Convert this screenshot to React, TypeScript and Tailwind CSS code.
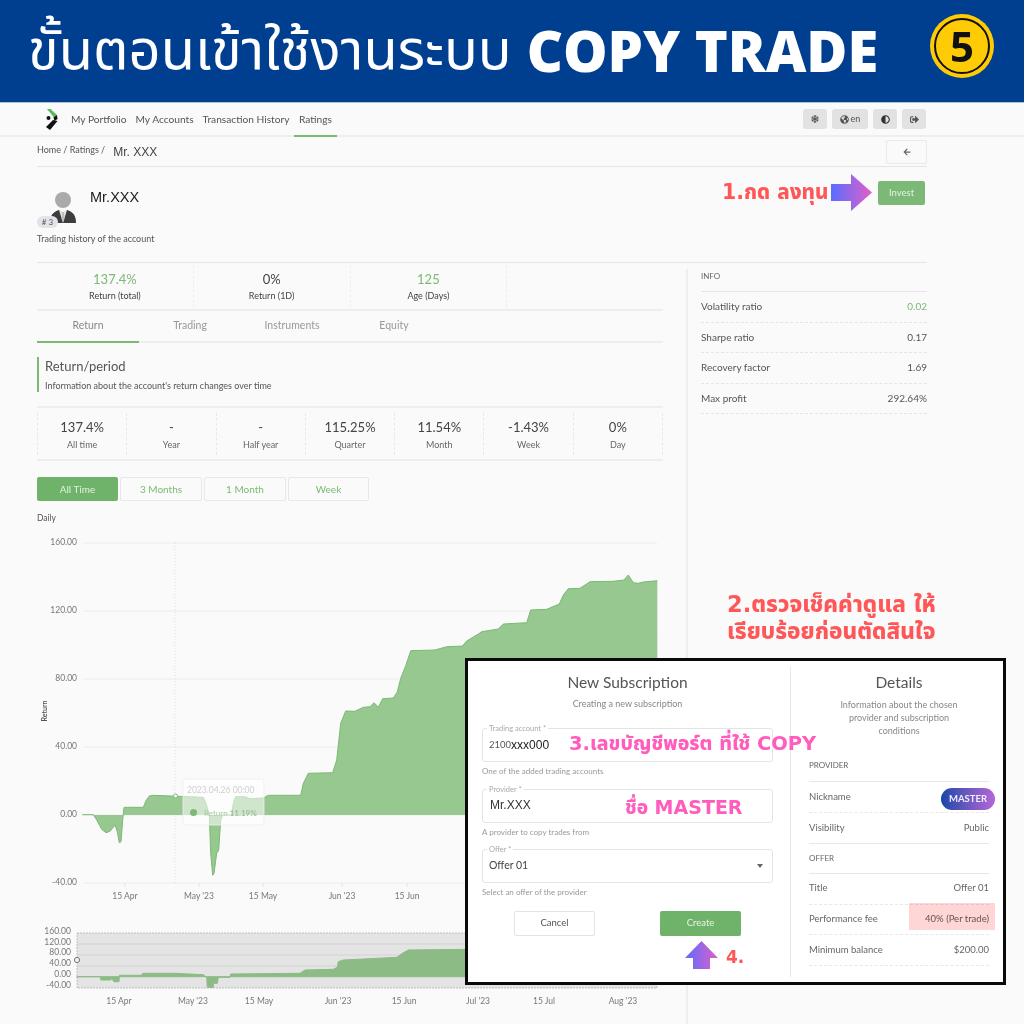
import React from "react";
import { FaSnowflake, FaGlobeAmericas, FaAdjust, FaSignOutAlt, FaArrowLeft } from "react-icons/fa";

const main: number[][] = [[247,884],[280,884],[290,900],[305,928],[318,938],[330,934],[345,915],[352,935],[358,968],[363,965],[368,900],[372,862],[430,862],[438,842],[448,828],[460,826],[610,832],[618,850],[628,885],[632,1000],[638,1066],[642,1060],[650,1000],[656,990],[662,900],[668,885],[695,885],[700,850],[707,830],[735,830],[750,836],[790,834],[805,826],[902,826],[910,790],[925,760],[998,758],[1010,720],[1022,610],[1037,573],[1065,574],[1090,562],[1110,560],[1122,548],[1135,562],[1148,536],[1180,534],[1192,516],[1202,475],[1218,435],[1232,392],[1305,390],[1340,380],[1390,378]];
const mainRight: number[][] = [[190,345],[200,333],[235,312],[245,305],[295,297],[310,282],[380,278],[392,240],[440,238],[478,222],[490,195],[505,176],[540,175],[570,155],[640,154],[672,150],[685,135],[700,158],[715,160],[730,156],[772,152]];
const over: number[][] = [[230,1370],[300,1370],[303,1380],[332,1380],[335,1376],[342,1385],[357,1385],[358,1366],[425,1366],[428,1360],[525,1360],[610,1364],[620,1372],[622,1402],[640,1402],[640,1390],[652,1390],[655,1372],[690,1372],[692,1362],[900,1360],[915,1350],[1000,1348],[1012,1342],[1015,1325],[1030,1320],[1190,1312],[1210,1298],[1225,1290],[1400,1288],[1971,1272]];

const mainPts = [
  ...main.map(([x, y]) => [x / 3, 520 + y / 3]),
  ...mainRight.map(([x, y]) => [400 + x / 3, 530 + y / 3]),
];
const overPts = over.map(([x, y]) => [x / 3, 520 + y / 3]);
const toD = (p: number[][]) => p.map(([x, y], i) => `${i ? "L" : "M"}${x.toFixed(1)} ${y.toFixed(1)}`).join(" ");

function Chart() {
  const first = mainPts[0][0];
  const last = mainPts[mainPts.length - 1][0];
  const oFirst = overPts[0][0];
  const oLast = overPts[overPts.length - 1][0];
  const ticks = [["160.00", 543], ["120.00", 611], ["80.00", 679], ["40.00", 747], ["0.00", 815], ["-40.00", 883]] as const;
  const oTicks = [["160.00", 932], ["120.00", 943], ["80.00", 953], ["40.00", 964], ["0.00", 975], ["-40.00", 986]] as const;
  return (
    <svg width="626" height="494" viewBox="37 530 626 494" className="block font-['Lato',sans-serif]">
      {ticks.map(([t, y]) => (
        <g key={t}>
          <line x1="83" x2="657" y1={y} y2={y} stroke="#ececec" strokeWidth="1" />
          <text x="77" y={y + 2} textAnchor="end" fontSize="8.5" fill="#777">{t}</text>
        </g>
      ))}
      <text transform="translate(47 711) rotate(-90)" textAnchor="middle" fontSize="7" fontWeight="700" fill="#555">Return</text>
      <line x1="175" x2="175" y1="543" y2="883" stroke="#ddd" strokeDasharray="1 2" />
      <path d={`${toD(mainPts)} L${last} 815 L${first} 815 Z`} fill="#96c88f" stroke="none" />
      <path d={toD(mainPts)} fill="none" stroke="#7cb976" strokeWidth="1" />
      <circle cx="175.5" cy="796" r="2" fill="#fff" stroke="#7cb976" />
      <rect x="183" y="779" width="81" height="46" rx="3" fill="#ffffff" fillOpacity="0.55" stroke="#eeeeee" strokeOpacity="0.8" />
      <text x="187" y="793" fontSize="8.5" fill="#cfcfcf">2023.04.26 00:00</text>
      <circle cx="193.5" cy="812.5" r="3.5" fill="#7cb976" />
      <text x="204" y="816" fontSize="8" fill="#a9c9a6">Return <tspan fontWeight="700" fill="#9fbf9c">11.19%</tspan></text>
      {[["15 Apr", 125], ["May '23", 199], ["15 May", 263], ["Jun '23", 342], ["15 Jun", 407]].map(([t, x]) => (
        <g key={t as string}>
          <line x1={x} x2={x} y1="883" y2="887" stroke="#e5e5e5" />
          <text x={x} y="899" textAnchor="middle" fontSize="8.5" fill="#777">{t}</text>
        </g>
      ))}
      <rect x="77" y="933" width="580" height="55" fill="#e4e4e4" stroke="#aaa" strokeDasharray="2 1" strokeWidth="0.7" />
      {[944, 955, 966].map((y) => (
        <line key={y} x1="77" x2="657" y1={y} y2={y} stroke="#d2d2d2" />
      ))}
      {oTicks.map(([t, y]) => (
        <text key={t} x="71" y={y + 2} textAnchor="end" fontSize="8.5" fill="#777">{t}</text>
      ))}
      <path d={`${toD(overPts)} L${oLast} 976.7 L${oFirst} 976.7 Z`} fill="#8cbb86" stroke="#8cbb86" strokeWidth="1" />
      <circle cx="77" cy="960" r="2.6" fill="#f3f3f3" stroke="#777" />
      {[["15 Apr", 119], ["May '23", 193], ["15 May", 259], ["Jun '23", 338], ["15 Jun", 404], ["Jul '23", 478], ["15 Jul", 544], ["Aug '23", 623]].map(([t, x]) => (
        <text key={t as string} x={x} y="1004" textAnchor="middle" fontSize="8.5" fill="#777">{t}</text>
      ))}
    </svg>
  );
}

function Logo() {
  return (
    <svg width="13" height="21" viewBox="0 0 13 21">
      <path d="M2 0 L5.5 0 L12 6 L9 8.5 Z" fill="#5cb85c" />
      <path d="M8.5 8.5 L12 6 L12.5 10 L9.5 12 Z" fill="#111" />
      <circle cx="3.5" cy="9" r="2" fill="#111" />
      <path d="M8 11 L12.5 12 L5 21 L1 18 Z" fill="#111" />
    </svg>
  );
}

function Avatar() {
  return (
    <svg width="28" height="33" viewBox="0 0 28 33">
      <circle cx="14" cy="9" r="8" fill="#aaaaaa" />
      <path d="M1 32 C1 24 4 21 10 19 L14 22 L18 19 C24 21 27 24 27 32 Z" fill="#3d3d3d" />
      <path d="M10 19 L14 32 L18 19 L14 21 Z" fill="#e4e4e4" />
      <path d="M13 21 L15 21 L15.4 28 L14 31 L12.6 28 Z" fill="#bdbdbd" />
    </svg>
  );
}

function Stat({ value, label, green }: { value: string; label: string; green?: boolean }) {
  return (
    <div className="flex-1 h-[41px] pt-[2px] border-r border-dashed border-[#eeeeee] flex flex-col items-center justify-center">
      <div className={`text-[13px] leading-[17px] ${green ? "text-[#7cb976]" : "text-[#444]"}`}>{value}</div>
      <div className="mt-[1px] text-[9px] leading-[14px] text-[#444]">{label}</div>
    </div>
  );
}

function Period({ value, label }: { value: string; label: string }) {
  return (
    <div className="flex-1 h-[42px] pt-[3px] border-r border-dashed border-[#e8e8e8] flex flex-col items-center justify-center">
      <div className="text-[13px] leading-[17px] text-[#444]">{value}</div>
      <div className="mt-[2px] text-[9px] leading-[14px] text-[#666]">{label}</div>
    </div>
  );
}

function InfoRow({ label, value, green }: { label: string; value: string; green?: boolean }) {
  return (
    <div className="h-[30.5px] border-b border-dashed border-[#e5e5e5] flex items-center justify-between text-[10px] text-[#555]">
      <span>{label}</span>
      <span className={green ? "text-[#7cb976]" : ""}>{value}</span>
    </div>
  );
}

function DetailRow({ label, value, dashed = true, h31 }: { label: string; value?: string; dashed?: boolean; h31?: boolean }) {
  return (
    <div className={`${h31 ? "h-[31px]" : "h-[30.5px]"} flex items-center justify-between text-[9.5px] text-[#666] border-b border-[#e8e8e8] ${dashed ? "border-dashed" : ""}`}>
      <span>{label}</span>
      {value ? <span>{value}</span> : null}
    </div>
  );
}

function Field({ label, helper, children }: { label: string; helper: string; children: React.ReactNode }) {
  return (
    <div className="h-[60.5px]">
      <div className="relative h-[34px] border border-[#e4e4e4] rounded-[3px] flex items-center pl-[6px] pr-[9px]">
        <span className="absolute left-[4px] top-[-5px] bg-white px-[2px] text-[7.5px] leading-[9px] text-[#aaa]">{label}</span>
        {children}
      </div>
      <div className="mt-[4px] text-[8px] leading-[10px] text-[#999]">{helper}</div>
    </div>
  );
}

function Modal() {
  return (
    <div className="absolute left-[465px] top-[658px] w-[541px] h-[327px] bg-white border-[3px] border-[#0a0a0a] flex font-['Lato',sans-serif]">
      <div className="w-[322px] pl-[14px] pr-[17px] flex flex-col">
        <div className="mt-[11px] text-center text-[15.5px] leading-[20px] text-[#555]">New Subscription</div>
        <div className="mt-[6px] text-center text-[9px] leading-[12px] text-[#888]">Creating a new subscription</div>
        <div className="mt-[18px]">
          <Field label="Trading account *" helper="One of the added trading accounts">
            <span className="text-[9.5px] text-[#555]">2100</span>
            <span className="text-[12px] text-[#222] font-['Liberation_Sans',sans-serif]">xxx000</span>
          </Field>
          <Field label="Provider *" helper="A provider to copy trades from">
            <span className="ml-[1px] mb-[2px] text-[12px] text-[#333] font-['Liberation_Sans',sans-serif]">Mr.XXX</span>
          </Field>
          <Field label="Offer *" helper="Select an offer of the provider">
            <span className="text-[10.5px] text-[#444]">Offer 01</span>
            <span className="ml-auto w-0 h-0 border-x-[3.5px] border-x-transparent border-t-[4px] border-t-[#666]" />
          </Field>
        </div>
        <div className="mt-[1.5px] flex">
          <button className="ml-[32px] w-[81px] h-[25px] rounded-[2px] border border-[#e4e4e4] bg-white text-[9.5px] text-[#555]">Cancel</button>
          <button className="ml-[65px] w-[81px] h-[25px] rounded-[2px] bg-[#6fb36a] text-[9.5px] text-[#e8f4e6]">Create</button>
        </div>
      </div>
      <div className="my-[5px] flex-1 border-l border-[#e8e8e8] pl-[18px] pr-[14px] flex flex-col">
        <div className="mt-[6px] text-center text-[15.5px] leading-[20px] text-[#555]">Details</div>
        <div className="mx-auto mt-[6px] w-[130px] text-center text-[9px] leading-[13px] text-[#888]">Information about the chosen provider and subscription conditions</div>
        <div className="mt-[22px] h-[23px] border-b border-[#e8e8e8] text-[8px] leading-[10px] text-[#666] pt-[1px]">PROVIDER</div>
        <DetailRow label="Nickname" h31 />
        <DetailRow label="Visibility" value="Public" dashed={false} />
        <div className="h-[30px] border-b border-[#e8e8e8] text-[8px] flex items-center text-[#666]">OFFER</div>
        <DetailRow label="Title" value="Offer 01" h31 />
        <DetailRow label="Performance fee" value="40% (Per trade)" />
        <DetailRow label="Minimum balance" value="$200.00" />
      </div>
    </div>
  );
}

function Annotations() {
  return (
    <>
      <div className="absolute left-[722px] top-[178px] text-[20.5px] leading-[28px] font-extrabold text-[#ff5757] font-['DejaVu_Sans','Noto_Sans_Thai',sans-serif] whitespace-nowrap">1.กด ลงทุน</div>
      <svg className="absolute left-[831px] top-[174px]" width="41" height="37" viewBox="0 0 41 37">
        <defs>
          <linearGradient id="a1" x1="0" x2="1" y1="0" y2="0"><stop offset="0" stopColor="#5b6dff" /><stop offset="1" stopColor="#e05fc8" /></linearGradient>
        </defs>
        <path d="M0 10 H20 V0 L41 18.5 L20 37 V27 H0 Z" fill="url(#a1)" />
      </svg>
      <div className="absolute left-[727px] top-[591px] text-[22.5px] leading-[27px] font-extrabold text-[#ff5757] font-['DejaVu_Sans','Noto_Sans_Thai',sans-serif] whitespace-nowrap">2.ตรวจเช็คค่าดูแล ให้<br />เรียบร้อยก่อนตัดสินใจ</div>
      <div className="absolute left-[569px] top-[732px] text-[19.5px] leading-[24px] font-extrabold text-[#ff5cbe] font-['DejaVu_Sans','Noto_Sans_Thai',sans-serif] whitespace-nowrap">3.เลขบัญชีพอร์ต ที่ใช้ COPY</div>
      <div className="absolute left-[625px] top-[795px] text-[19px] leading-[24px] font-extrabold text-[#ff5cbe] font-['DejaVu_Sans','Noto_Sans_Thai',sans-serif] whitespace-nowrap">ชื่อ MASTER</div>
      <div className="absolute left-[941px] top-[788px] w-[54px] h-[22px] rounded-full bg-gradient-to-r from-[#0d47a8] to-[#b565d8] flex items-center justify-center text-[9.5px] font-bold text-[#eef] font-['Lato',sans-serif]">MASTER</div>
      <div className="absolute left-[909px] top-[903px] w-[86px] h-[27px] bg-[#ffd5d5] mix-blend-multiply" />
      <svg className="absolute left-[685px] top-[941px]" width="33" height="28" viewBox="0 0 33 28">
        <defs>
          <linearGradient id="a2" x1="0" x2="1" y1="0" y2="0"><stop offset="0" stopColor="#5b6dff" /><stop offset="1" stopColor="#e05fc8" /></linearGradient>
        </defs>
        <path d="M16.5 0 L33 17 H25 V28 H8 V17 H0 Z" fill="url(#a2)" />
      </svg>
      <div className="absolute left-[726px] top-[945px] text-[17px] leading-[24px] font-bold text-[#ff5757] font-['DejaVu_Sans',sans-serif]">4.</div>
    </>
  );
}

export default function App() {
  return (
    <div className="relative w-[1024px] h-[1024px] overflow-hidden bg-[#fafafa] blur-[0.35px] font-['Lato',sans-serif]">
      <header className="h-[103px] bg-[#003f8f] border-b border-[#a9c2dc] flex items-start pl-[28px] pr-[30px] text-white">
        <div className="mt-[14px] text-[56px] leading-[76px] whitespace-nowrap font-['Noto_Sans_Thai','Noto_Sans',sans-serif]">ขั้นตอนเข้าใช้งานระบบ</div>
        <div className="ml-[15px] mt-[12px] text-[56px] leading-[76px] font-extrabold whitespace-nowrap font-['Open_Sans',sans-serif]">COPY TRADE</div>
        <div className="ml-auto mt-[14px] w-[64px] h-[64px] rounded-full bg-[#ffcb05] flex items-center justify-center">
          <div className="w-[56px] h-[56px] rounded-full border-2 border-[#111] flex items-center justify-center text-[42px] font-bold leading-none text-[#111] font-['Open_Sans',sans-serif]">5</div>
        </div>
      </header>

      <nav className="h-[34px] border-b-2 border-[#eeeeee] pl-[37px] flex">
        <div className="w-[890px] flex items-stretch">
          <div className="ml-[8px] w-[21.5px] flex items-center"><Logo /></div>
          {["My Portfolio", "My Accounts", "Transaction History"].map((t) => (
            <div key={t} className="px-[4.5px] pt-[1px] flex items-center text-[10.2px] text-[#555]">{t}</div>
          ))}
          <div className="px-[4.5px] pt-[1px] w-[43px] flex items-center justify-center text-[10.2px] text-[#555] border-b-2 border-[#7cb976] mb-[-2px]">Ratings</div>
          <div className="ml-auto mr-[1px] flex items-center gap-[5px] text-[#555]">
            <div className="w-[24px] h-[20px] rounded-[3px] bg-[#e2e2e2] flex items-center justify-center"><FaSnowflake size={8} /></div>
            <div className="w-[36px] h-[20px] rounded-[3px] bg-[#e2e2e2] flex items-center justify-center gap-[2px] text-[9px]"><FaGlobeAmericas size={9} />en</div>
            <div className="w-[24px] h-[20px] rounded-[3px] bg-[#e2e2e2] flex items-center justify-center text-[#333]"><FaAdjust size={9} /></div>
            <div className="w-[24px] h-[20px] rounded-[3px] bg-[#e2e2e2] flex items-center justify-center"><FaSignOutAlt size={9} /></div>
          </div>
        </div>
      </nav>

      <div className="ml-[37px] w-[890px] h-[30px] border-b border-[#e5e5e5] flex items-center">
        <span className="text-[9px] text-[#555] mb-[4px]">Home&nbsp;/&nbsp;Ratings&nbsp;/</span>
        <span className="ml-[8px] text-[12px] text-[#444] font-['Liberation_Sans',sans-serif]">Mr. XXX</span>
        <div className="ml-auto w-[41px] h-[24px] border border-[#eaeaea] rounded-[2px] flex items-center justify-center text-[#666]"><FaArrowLeft size={8} /></div>
      </div>

      <div className="ml-[37px] w-[890px] h-[96px] border-b border-[#e5e5e5] flex">
        <div className="relative w-[53px]">
          <div className="absolute left-[12px] top-[24px]"><Avatar /></div>
          <div className="absolute left-0 top-[49px] w-[21px] h-[12px] rounded-full bg-[#e2e4ea] text-[8px] leading-[12px] text-center text-[#555]">#&nbsp;3</div>
          <div className="absolute left-0 top-[66px] text-[9px] leading-[11px] whitespace-nowrap text-[#555]">Trading history of the account</div>
        </div>
        <div className="mt-[21px] text-[14.5px] leading-[18px] text-[#222] font-['Liberation_Sans',sans-serif]">Mr.XXX</div>
        <div className="ml-auto mr-[2px] mt-[14px] w-[47px] h-[24px] rounded-[2px] bg-[#7cb976] text-[9.5px] text-[#e4f1e2] flex items-center justify-center">Invest</div>
      </div>

      <div className="ml-[37px] flex h-[761px]">
        <div className="w-[626px]">
          <div className="h-[48px] border-b-2 border-[#eeeeee] flex items-center">
            <Stat value="137.4%" label="Return (total)" green />
            <Stat value="0%" label="Return (1D)" />
            <Stat value="125" label="Age (Days)" green />
            <div className="flex-1" />
          </div>
          <div className="h-[32px] border-b-2 border-[#eeeeee] flex text-[10.5px] text-[#999]">
            <div className="w-[102px] border-b-2 border-[#7cb976] mb-[-2px] flex items-center justify-center text-[#888]">Return</div>
            <div className="w-[102px] flex items-center justify-center">Trading</div>
            <div className="w-[102px] flex items-center justify-center">Instruments</div>
            <div className="w-[102px] flex items-center justify-center">Equity</div>
          </div>
          <div className="mt-[14px] h-[35px] border-l-2 border-[#7cb976] pl-[6px]">
            <div className="text-[13px] leading-[18px] text-[#555]">Return/period</div>
            <div className="mt-[5px] text-[9px] leading-[11px] text-[#555]">Information about the account's return changes over time</div>
          </div>
          <div className="mt-[14px] h-[55px] border-y-2 border-[#eeeeee] flex items-center">
            <div className="w-px h-[42px] border-l border-dashed border-[#e8e8e8]" />
            <Period value="137.4%" label="All time" />
            <Period value="-" label="Year" />
            <Period value="-" label="Half year" />
            <Period value="115.25%" label="Quarter" />
            <Period value="11.54%" label="Month" />
            <Period value="-1.43%" label="Week" />
            <Period value="0%" label="Day" />
          </div>
          <div className="mt-[16px] flex gap-[2px] text-[10px] text-[#7cb976]">
            <div className="w-[81px] h-[24px] rounded-[2px] bg-[#6fb36a] text-[#e4f1e2] flex items-center justify-center">All Time</div>
            <div className="w-[82px] h-[24px] rounded-[2px] border border-[#e8e8e8] flex items-center justify-center">3 Months</div>
            <div className="w-[82px] h-[24px] rounded-[2px] border border-[#e8e8e8] flex items-center justify-center">1 Month</div>
            <div className="w-[81px] h-[24px] rounded-[2px] border border-[#e8e8e8] flex items-center justify-center">Week</div>
          </div>
          <div className="mt-[12px] h-[17px] text-[8.5px] leading-[11px] text-[#555]">Daily</div>
          <Chart />
        </div>
        <div className="ml-[23px] w-[241px] mt-[6px] border-l-2 border-[#eeeeee] pl-[13px]">
          <div className="h-[23px] border-b border-[#e5e5e5] text-[8px] leading-[14px] text-[#666]">INFO</div>
          <InfoRow label="Volatility ratio" value="0.02" green />
          <InfoRow label="Sharpe ratio" value="0.17" />
          <InfoRow label="Recovery factor" value="1.69" />
          <InfoRow label="Max profit" value="292.64%" />
        </div>
      </div>

      <Modal />
      <Annotations />
    </div>
  );
}
